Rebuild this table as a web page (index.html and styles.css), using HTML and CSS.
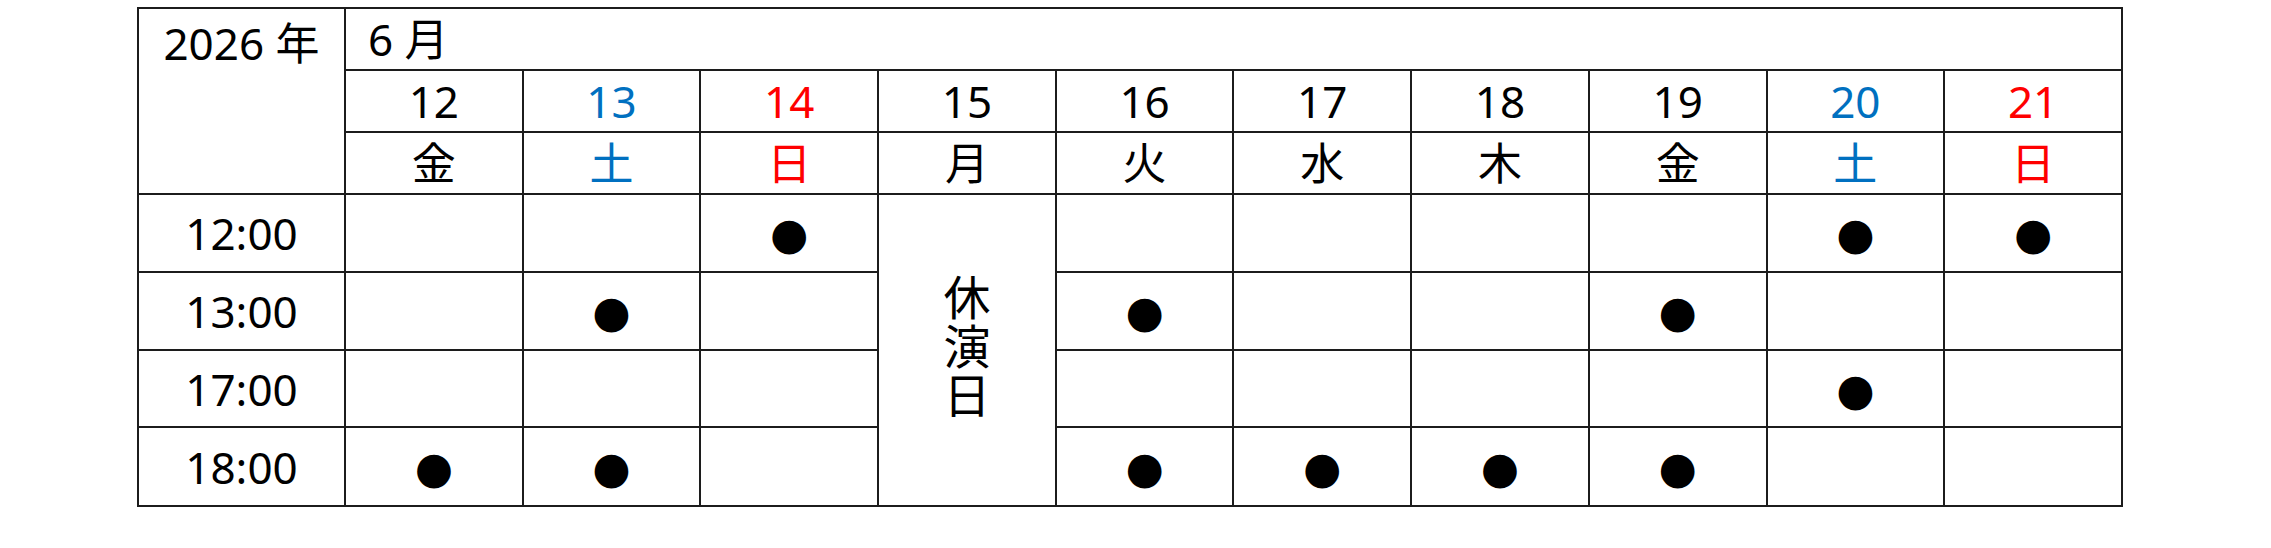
FILE: index.html
```html
<!DOCTYPE html>
<html lang="ja">
<head>
<meta charset="utf-8">
<title>公演スケジュール</title>
<link rel="stylesheet" href="styles.css">
</head>
<body>
<div class="page">
<table class="schedule">
  <colgroup>
    <col class="col-label">
    <col span="10">
  </colgroup>
  <tbody>
    <tr class="row-head">
      <td class="year" rowspan="3">2026 年</td>
      <td class="month" colspan="10">6 月</td>
    </tr>
    <tr class="row-head">
      <td>12</td>
      <td class="sat">13</td>
      <td class="sun">14</td>
      <td>15</td>
      <td>16</td>
      <td>17</td>
      <td>18</td>
      <td>19</td>
      <td class="sat">20</td>
      <td class="sun">21</td>
    </tr>
    <tr class="row-head">
      <td>金</td>
      <td class="sat">土</td>
      <td class="sun">日</td>
      <td>月</td>
      <td>火</td>
      <td>水</td>
      <td>木</td>
      <td>金</td>
      <td class="sat">土</td>
      <td class="sun">日</td>
    </tr>
    <tr class="row-time">
      <td class="time">12:00</td>
      <td></td>
      <td></td>
      <td><span class="dot">●</span></td>
      <td class="off" rowspan="4"><span class="off-text">休演日</span></td>
      <td></td>
      <td></td>
      <td></td>
      <td></td>
      <td><span class="dot">●</span></td>
      <td><span class="dot">●</span></td>
    </tr>
    <tr class="row-time">
      <td class="time">13:00</td>
      <td></td>
      <td><span class="dot">●</span></td>
      <td></td>
      <td><span class="dot">●</span></td>
      <td></td>
      <td></td>
      <td><span class="dot">●</span></td>
      <td></td>
      <td></td>
    </tr>
    <tr class="row-time row-17">
      <td class="time">17:00</td>
      <td></td>
      <td></td>
      <td></td>
      <td></td>
      <td></td>
      <td></td>
      <td></td>
      <td><span class="dot">●</span></td>
      <td></td>
    </tr>
    <tr class="row-time row-18">
      <td class="time">18:00</td>
      <td><span class="dot">●</span></td>
      <td><span class="dot">●</span></td>
      <td></td>
      <td><span class="dot">●</span></td>
      <td><span class="dot">●</span></td>
      <td><span class="dot">●</span></td>
      <td><span class="dot">●</span></td>
      <td></td>
      <td></td>
    </tr>
  </tbody>
</table>
</div>
</body>
</html>
```

FILE: styles.css
```css
html, body {
  margin: 0;
  padding: 0;
  background: #ffffff;
}

.page {
  padding: 7px 0 0 137px;
}

.schedule {
  border-collapse: collapse;
  table-layout: fixed;
  width: 1986px;
  font-family: "Noto Sans", "Noto Sans CJK JP", sans-serif;
  font-size: 44px;
  color: #000000;
}

.col-label {
  width: 207px;
}

.schedule td {
  border: 2px solid #1c1c1c;
  padding: 0;
  text-align: center;
  vertical-align: middle;
  line-height: 1;
}

.row-head {
  height: 62px;
}

.row-time {
  height: 78px;
}

.row-17 {
  height: 77px;
}

.row-18 {
  height: 79px;
}

.schedule td.year {
  vertical-align: top;
  padding-top: 12px;
}

.schedule td.month {
  text-align: left;
  padding-left: 22px;
}

.sat {
  color: #0070c0;
}

.sun {
  color: #ff0000;
}

.dot {
  font-family: "DejaVu Sans", sans-serif;
  font-size: 44px;
  line-height: 1;
}

.off-text {
  display: inline-block;
  writing-mode: vertical-rl;
  text-orientation: upright;
  font-family: "Noto Sans CJK JP", sans-serif;
  font-size: 47px;
  line-height: 1;
  letter-spacing: 2px;
}
```
